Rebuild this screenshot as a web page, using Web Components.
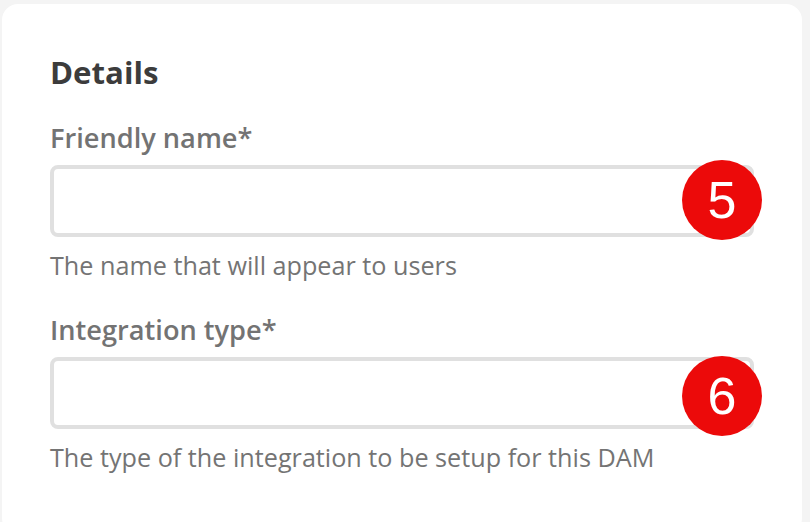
<!DOCTYPE html>
<html>
<head>
<meta charset="utf-8">
<style>
  html, body {
    margin: 0;
    height: 522px;
    overflow: hidden;
    background: #f4f4f4;
    font-family: "Open Sans", sans-serif;
  }
</style>
</head>
<body>
<details-card heading="Details">
  <form-field label="Friendly name*" hint="The name that will appear to users" marker="5" style="--marker-top: -5px"></form-field>
  <form-field label="Integration type*" hint="The type of the integration to be setup for this DAM" marker="6" style="--marker-top: -1px"></form-field>
</details-card>

<script>
const cardTemplate = document.createElement("template")
cardTemplate.innerHTML = `
  <style>
    :host {
      display: block;
      box-sizing: border-box;
      width: 800px;
      height: 530px;
      margin: 4px 0 0 2px;
      padding: 48px 48px 0;
      background: #fff;
      border-radius: 16px;
    }
    h2 {
      margin: 0 0 28px;
      font-size: 31.2px;
      line-height: 40px;
      font-weight: 700;
      color: #3c3c3c;
    }
  </style>
  <h2></h2>
  <slot></slot>
`

class DetailsCard extends HTMLElement {
  constructor() {
    super()
    const shadow = this.attachShadow({ mode: "open" });
    shadow.append(cardTemplate.content.cloneNode(true));
    shadow.querySelector("h2").innerText = this.getAttribute("heading");
  }
}

const fieldTemplate = document.createElement("template")
fieldTemplate.innerHTML = `
  <style>
    :host {
      display: block;
      margin-bottom: 29px;
    }
    label {
      display: block;
      margin-bottom: 9px;
      font-size: 27.2px;
      line-height: 36px;
      font-weight: 600;
      color: #737373;
    }
    .box {
      position: relative;
      width: 704px;
    }
    input {
      display: block;
      box-sizing: border-box;
      width: 100%;
      height: 72px;
      margin: 0;
      background: #fff;
      border: 4px solid #e0e0e0;
      border-radius: 8px;
      outline: none;
    }
    .marker {
      position: absolute;
      left: 632px;
      top: var(--marker-top, -5px);
      width: 80px;
      height: 80px;
      border-radius: 50%;
      background: #ec0a0a;
      color: #fff;
      font-family: "Liberation Sans", sans-serif;
      font-size: 52px;
      line-height: 80px;
      text-align: center;
    }
    p {
      margin: 10px 0 0;
      font-size: 25.2px;
      line-height: 36px;
      color: #747474;
    }
  </style>
  <label></label>
  <div class="box">
    <input type="text">
    <span class="marker"></span>
  </div>
  <p></p>
`

class FormField extends HTMLElement {
  constructor() {
    super()
    const shadow = this.attachShadow({ mode: "open" });
    shadow.append(fieldTemplate.content.cloneNode(true));
    shadow.querySelector("label").innerText = this.getAttribute("label");
    shadow.querySelector("p").innerText = this.getAttribute("hint");
    shadow.querySelector(".marker").innerText = this.getAttribute("marker");
  }
}

customElements.define("details-card", DetailsCard);
customElements.define("form-field", FormField);
</script>
</body>
</html>
